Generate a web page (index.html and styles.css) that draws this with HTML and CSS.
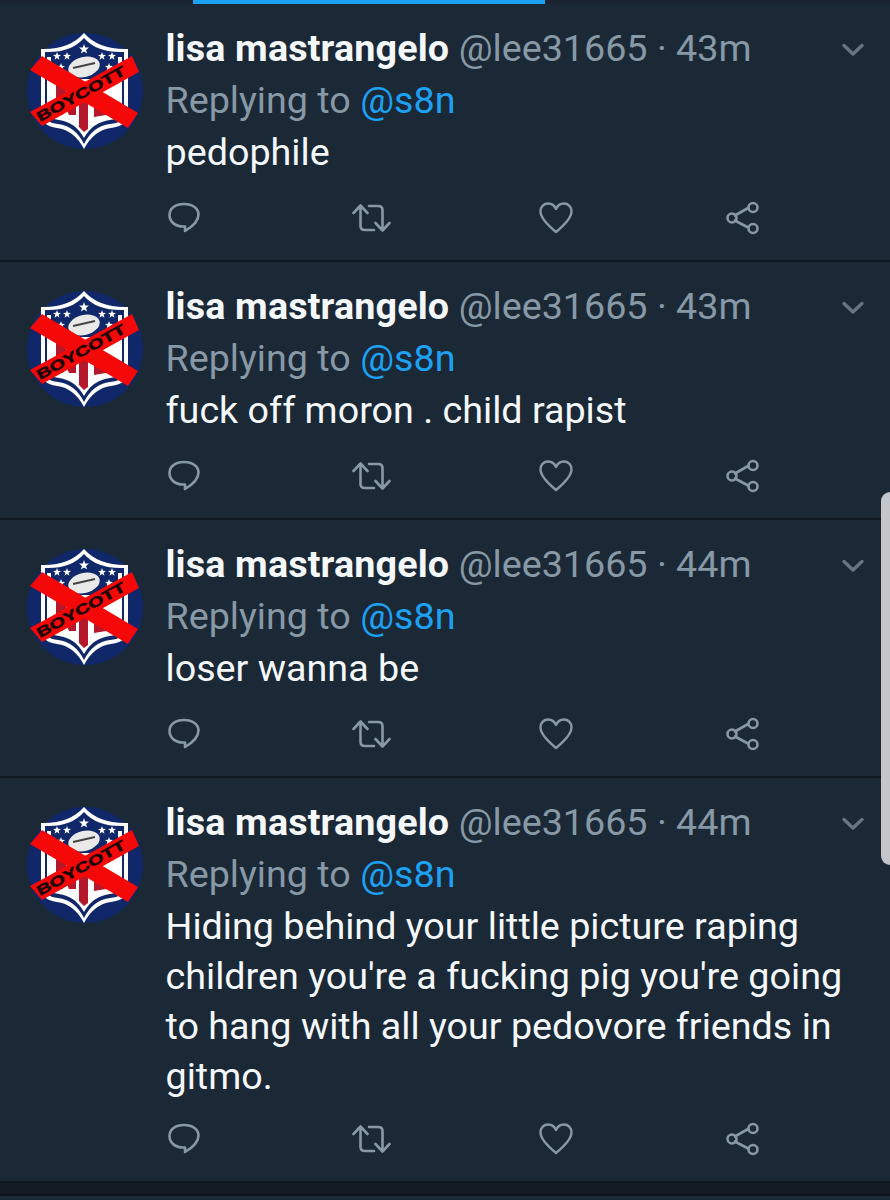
FILE: index.html
```html
<!DOCTYPE html>
<html lang="en">
<head>
<meta charset="utf-8">
<title>Replies</title>
<link rel="stylesheet" href="styles.css">
</head>
<body>
<svg class="defs" width="0" height="0" aria-hidden="true">
  <symbol id="star" viewBox="0 0 10 10">
    <path d="M5 0 L6.200 3.500 L10 3.600 L7 5.900 L8.100 9.600 L5 7.400 L1.900 9.600 L3 5.900 L0 3.600 L3.800 3.500Z" fill="#fff"/>
  </symbol>
  <symbol id="avatar" viewBox="0 0 118 120">
    <circle cx="59" cy="60" r="58" fill="#10286a"/>
    <path d="M15 18 Q43 19 58 2 Q73 19 102 18 V82 Q102 95 85 97 Q68 99 58 118 Q48 99 31 97 Q15 95 15 82Z" fill="#fff"/>
    <path d="M19 21 Q45 22 58 7 Q71 22 98 21 V82 Q98 92 84 93 Q67 95 58 113 Q49 95 32 93 Q19 92 19 82Z" fill="#10286a"/>
    <path d="M21 26 H25 V48 H92 V26 H96 V80 Q96 88 84 89 Q67 91 58 107 Q49 91 33 89 Q21 88 21 80Z" fill="#fff"/>
    <use href="#star" x="53" y="13" width="10" height="10"/>
    <use href="#star" x="27" y="21" width="8" height="8"/>
    <use href="#star" x="37" y="21" width="8" height="8"/>
    <use href="#star" x="72" y="21" width="8" height="8"/>
    <use href="#star" x="82" y="21" width="8" height="8"/>
    <use href="#star" x="31" y="32" width="8" height="8"/>
    <use href="#star" x="79" y="32" width="8" height="8"/>
    <ellipse cx="58" cy="36" rx="16" ry="10" fill="#e9e9e9" transform="rotate(-14 58 36)"/>
    <path d="M47 37 L69 32" stroke="#444" stroke-width="1.800"/>
    <path d="M30 54 H38 L43 68 V54 H50 V84 H43 L37 70 V84 L30 82Z M53 54 H66 V62 H62 V66 H65 V73 H62 V98 L58 101 L53 96Z M68 62 H75 V76 H86 V83 L68 86Z" fill="#b5182b"/>
    <path d="M4 39 L16 25 L112 82 L102 97Z" fill="#f50808"/>
    <path d="M4 81 L16 95 L113 41 L106 25Z" fill="#f50808"/>
    <text class="boycott" transform="translate(14 91) rotate(-29)" textLength="99" lengthAdjust="spacingAndGlyphs">BOYCOTT</text>
  </symbol>
  <symbol id="i-reply" viewBox="0 0 36 36">
    <path d="M19 31 V26.500 H17 C9.500 26.500 3.500 22 3.500 15 C3.500 8.500 9.500 4 18 4 C26.500 4 32.500 8.500 32.500 14.500 C32.500 22 25 27.500 19 31Z" fill="none" stroke="currentColor" stroke-width="2.600" stroke-linejoin="round"/>
  </symbol>
  <symbol id="i-rt" viewBox="0 0 40 36">
    <path d="M2.500 13 L9.500 5.500 L16.500 13 M9.500 6 V26 Q9.500 30 14 30 H23 M18 6 H27 Q31.500 6 31.500 10 V30 M24.500 23 L31.500 30.500 L38.500 23" fill="none" stroke="currentColor" stroke-width="2.600" stroke-linecap="round" stroke-linejoin="round"/>
  </symbol>
  <symbol id="i-heart" viewBox="0 0 36 36">
    <path d="M18 32 C12 27 2.500 19 2.500 11.500 C2.500 6.500 6 3.500 10 3.500 C13.500 3.500 16.500 5.500 18 9 C19.500 5.500 22.500 3.500 26 3.500 C30 3.500 33.500 6.500 33.500 11.500 C33.500 19 24 27 18 32Z" fill="none" stroke="currentColor" stroke-width="2.400" stroke-linejoin="round"/>
  </symbol>
  <symbol id="i-share" viewBox="0 0 36 36">
    <path d="M9 16 L24 7.500 M9 20 L24 28" stroke="currentColor" stroke-width="2.600"/>
    <circle cx="7" cy="18" r="4.500" fill="none" stroke="currentColor" stroke-width="2.600"/>
    <circle cx="28" cy="7.500" r="4.500" fill="none" stroke="currentColor" stroke-width="2.600"/>
    <circle cx="28" cy="28.500" r="4.500" fill="none" stroke="currentColor" stroke-width="2.600"/>
  </symbol>
  <symbol id="i-chev" viewBox="0 0 24 16">
    <path d="M3 3.500 L12 12 L21 3.500" fill="none" stroke="currentColor" stroke-width="3.400" stroke-linecap="round" stroke-linejoin="round"/>
  </symbol>
</svg>

<div class="topbar"><span class="topbar-active"></span></div>

<main class="timeline">
  <article class="tweet">
    <svg class="avatar"><use href="#avatar"/></svg>
    <div class="content">
      <div class="head"><span class="name">lisa mastrangelo</span> <span class="meta">@lee31665 · 43m</span></div>
      <div class="reply">Replying to <span class="link">@s8n</span></div>
      <p class="body">pedophile</p>
      <div class="actions">
        <svg class="ic ic-reply"><use href="#i-reply"/></svg>
        <svg class="ic ic-rt"><use href="#i-rt"/></svg>
        <svg class="ic ic-heart"><use href="#i-heart"/></svg>
        <svg class="ic ic-share"><use href="#i-share"/></svg>
      </div>
    </div>
    <svg class="chev"><use href="#i-chev"/></svg>
  </article>
  <article class="tweet">
    <svg class="avatar"><use href="#avatar"/></svg>
    <div class="content">
      <div class="head"><span class="name">lisa mastrangelo</span> <span class="meta">@lee31665 · 43m</span></div>
      <div class="reply">Replying to <span class="link">@s8n</span></div>
      <p class="body">fuck off moron . child rapist</p>
      <div class="actions">
        <svg class="ic ic-reply"><use href="#i-reply"/></svg>
        <svg class="ic ic-rt"><use href="#i-rt"/></svg>
        <svg class="ic ic-heart"><use href="#i-heart"/></svg>
        <svg class="ic ic-share"><use href="#i-share"/></svg>
      </div>
    </div>
    <svg class="chev"><use href="#i-chev"/></svg>
  </article>
  <article class="tweet">
    <svg class="avatar"><use href="#avatar"/></svg>
    <div class="content">
      <div class="head"><span class="name">lisa mastrangelo</span> <span class="meta">@lee31665 · 44m</span></div>
      <div class="reply">Replying to <span class="link">@s8n</span></div>
      <p class="body">loser wanna be</p>
      <div class="actions">
        <svg class="ic ic-reply"><use href="#i-reply"/></svg>
        <svg class="ic ic-rt"><use href="#i-rt"/></svg>
        <svg class="ic ic-heart"><use href="#i-heart"/></svg>
        <svg class="ic ic-share"><use href="#i-share"/></svg>
      </div>
    </div>
    <svg class="chev"><use href="#i-chev"/></svg>
  </article>
  <article class="tweet tweet-long">
    <svg class="avatar"><use href="#avatar"/></svg>
    <div class="content">
      <div class="head"><span class="name">lisa mastrangelo</span> <span class="meta">@lee31665 · 44m</span></div>
      <div class="reply">Replying to <span class="link">@s8n</span></div>
      <p class="body">Hiding behind your little picture raping<br>children you're a fucking pig you're going<br>to hang with all your pedovore friends in<br>gitmo.</p>
      <div class="actions">
        <svg class="ic ic-reply"><use href="#i-reply"/></svg>
        <svg class="ic ic-rt"><use href="#i-rt"/></svg>
        <svg class="ic ic-heart"><use href="#i-heart"/></svg>
        <svg class="ic ic-share"><use href="#i-share"/></svg>
      </div>
    </div>
    <svg class="chev"><use href="#i-chev"/></svg>
  </article>
</main>
<div class="gap"></div>
<div class="scrollthumb"></div>
</body>
</html>
```
FILE: styles.css
```css
* { box-sizing: border-box; }
html, body { margin: 0; padding: 0; }
body {
  width: 890px;
  height: 1200px;
  overflow: hidden;
  background: #1b2836;
  font-family: Roboto, "Liberation Sans", sans-serif;
  position: relative;
}
.defs { position: absolute; }
.boycott {
  font: 900 14px "Liberation Sans", sans-serif;
  fill: #1a0505;
  stroke: #1a0505;
  stroke-width: .5px;
}
.topbar { height: 4px; background: #1a2430; display: flex; }
.topbar-active { margin-left: 193px; width: 352px; height: 4px; background: #1da1f2; }
.tweet {
  display: flex;
  height: 258px;
  padding: 25px 0 0 26px;
  border-bottom: 2px solid #101822;
  position: relative;
}
.tweet-long { height: 405px; border-bottom-color: #0f1620; }
.avatar { width: 118px; height: 120px; flex: none; margin-top: 2px; }
.content { margin-left: 21.500px; flex: 1; min-width: 0; }
.head { font-size: 37.700px; line-height: 38px; white-space: nowrap; height: 38px; }
.name { color: #f5f8fa; font-weight: 700; letter-spacing: .15px; }
.meta { color: #8899a6; }
.reply { margin-top: 14px; font-size: 37.700px; line-height: 38px; color: #8899a6; }
.link { color: #1da1f2; }
.body {
  margin: 8px 0 0;
  font-size: 37.700px;
  line-height: 50px;
  color: #f5f8fa;
}
.actions {
  position: absolute;
  left: 0;
  right: 0;
  bottom: 24px;
  height: 36px;
  color: #8899a6;
}
.ic { position: absolute; width: 36px; height: 36px; top: 0; }
.ic-reply { left: 166px; }
.ic-rt { left: 351px; width: 40px; }
.ic-heart { left: 538px; }
.ic-share { left: 725px; }
.chev { position: absolute; top: 38px; left: 841px; width: 24px; height: 16px; color: #66757f; }
.gap { height: 13px; background: #141b25; border-bottom: 2px solid #0d131b; }
.scrollthumb {
  position: absolute;
  left: 881px;
  top: 492px;
  width: 9px;
  height: 373px;
  background: #c2c5ca;
  border-radius: 9px 0 0 9px;
}
```
